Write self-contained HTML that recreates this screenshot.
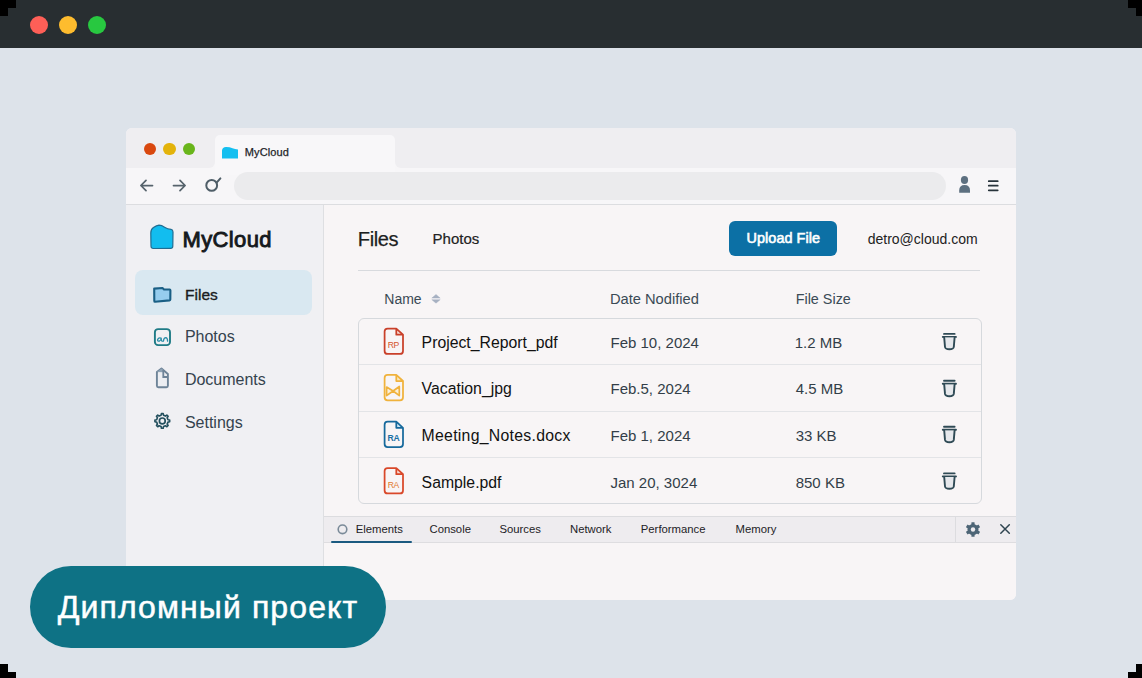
<!DOCTYPE html>
<html><head><meta charset="utf-8">
<style>
*{margin:0;padding:0;box-sizing:border-box}
html,body{width:1142px;height:678px;overflow:hidden}
body{position:relative;background:#dde3ea;font-family:"Liberation Sans",sans-serif}
.a{position:absolute}
.t{position:absolute;line-height:1;white-space:nowrap}
.blk{position:absolute;background:#000}
</style></head><body>
<!-- top dark bar -->
<div class="a" style="left:0;top:0;width:1142px;height:48px;background:#282e31"></div>
<div class="a" style="left:30px;top:16px;width:18px;height:18px;border-radius:50%;background:#fe5f57"></div>
<div class="a" style="left:59px;top:16px;width:18px;height:18px;border-radius:50%;background:#febc2e"></div>
<div class="a" style="left:88px;top:16px;width:18px;height:18px;border-radius:50%;background:#28c840"></div>

<!-- browser window -->
<div class="a" id="win" style="left:126px;top:128px;width:890px;height:472px;border-radius:6px;overflow:hidden;background:#f7f6f8">
  <!-- title bar segments -->
  <div class="a" style="left:0;top:0;width:89px;height:39.5px;background:#efeef1;border-bottom-right-radius:6px"></div>
  <div class="a" style="left:269px;top:0;width:621px;height:39.5px;background:#efeef1;border-bottom-left-radius:6px"></div>
  <div class="a" style="left:89px;top:0;width:180px;height:20px;background:#efeef1"></div>
  <div class="a" style="left:89px;top:7px;width:180px;height:40px;background:#f8f7f9;border-radius:5px 5px 0 0"></div>
  <!-- traffic -->
  <div class="a" style="left:17.8px;top:14.6px;width:12.4px;height:12.4px;border-radius:50%;background:#d9480f"></div>
  <div class="a" style="left:37.2px;top:14.6px;width:12.4px;height:12.4px;border-radius:50%;background:#e3b30b"></div>
  <div class="a" style="left:56.6px;top:14.6px;width:12.4px;height:12.4px;border-radius:50%;background:#69b51b"></div>
  <!-- toolbar border -->
  <div class="a" style="left:0;top:76px;width:890px;height:1px;background:#dcdde0"></div>
  <!-- address bar -->
  <div class="a" style="left:108px;top:44px;width:712px;height:28px;border-radius:14px;background:#ebebed"></div>
  <!-- sidebar -->
  <div class="a" style="left:0;top:77px;width:197px;height:395px;background:#f0f0f3"></div>
  <div class="a" style="left:197px;top:77px;width:1px;height:395px;background:#dedfe2"></div>
  <!-- main -->
  <div class="a" style="left:198px;top:77px;width:692px;height:395px;background:#f8f5f6"></div>
  <!-- active item -->
  <div class="a" style="left:9px;top:142px;width:177px;height:45px;border-radius:8px;background:#d9e8f1"></div>
  <!-- header divider -->
  <div class="a" style="left:232px;top:142px;width:622px;height:1px;background:#d8dade"></div>
  <!-- table -->
  <div class="a" style="left:232px;top:189.5px;width:624px;height:186px;border:1px solid #d6d9dd;border-radius:6px;background:#f8f5f6"></div>
  <div class="a" style="left:233px;top:236px;width:622px;height:1px;background:#e3e4e7"></div>
  <div class="a" style="left:233px;top:283px;width:622px;height:1px;background:#e3e4e7"></div>
  <div class="a" style="left:233px;top:329px;width:622px;height:1px;background:#e3e4e7"></div>
  <!-- upload button -->
  <div class="a" style="left:603px;top:93px;width:108px;height:35px;border-radius:6px;background:#0c70a5"></div>
  <!-- devtools -->
  <div class="a" style="left:198px;top:388px;width:692px;height:1px;background:#dcdcdf"></div>
  <div class="a" style="left:198px;top:389px;width:692px;height:25px;background:#eeecef"></div>
  <div class="a" style="left:198px;top:414px;width:692px;height:1px;background:#dedde0"></div>
  <div class="a" style="left:204.5px;top:413px;width:81px;height:2px;border-radius:1px;background:#1b5a80"></div>
  <div class="a" style="left:829px;top:389px;width:1px;height:25px;background:#dcdcdf"></div>
</div>

<svg class="a" style="left:0;top:0" width="1142" height="678" viewBox="0 0 1142 678">
<path d="M222 158.4 V150.5 Q222.3 147.2 226 147 Q229.5 146.9 232.5 148.3 Q235 149.3 238 149.6 V158.4 Z" fill="#14bff0"/>
<g fill="none" stroke="#56636c" stroke-width="1.75" stroke-linecap="round" stroke-linejoin="round">
<path d="M152.5 185.5 H141 M146 180.4 L140.9 185.5 L146 190.6"/>
<path d="M173.5 185.5 H185 M180 180.4 L185.1 185.5 L180 190.6"/>
</g>
<g fill="none" stroke="#4f5e68" stroke-width="2"><circle cx="211.7" cy="185.4" r="5.4"/><path d="M216.6 182.6 L220.4 178.4" stroke-linecap="round"/></g>
<ellipse cx="964.5" cy="180" rx="3.6" ry="3.9" fill="#5d7080"/>
<path d="M959.2 192.8 V190.5 Q959.2 185 964.6 185 Q970 185 970 190.5 V192.8 Z" fill="#5d7080"/>
<g stroke="#27333b" stroke-width="1.8" stroke-linecap="round"><path d="M988.8 181.2 H997.7 M988.8 185.7 H997.7 M988.8 190.3 H997.7"/></g>
<path d="M150.8 233 Q150.8 229.3 153.5 227.6 Q156.5 225.4 159 225.2 Q161.5 225.2 165 227.4 Q167.5 229 171 229.4 Q173 229.7 173 232 L172.8 246.3 Q172.7 248.4 170.7 248.4 L153.3 248.5 Q151.1 248.5 151 246.3 Z" fill="#12bdef" stroke="#1f6d92" stroke-width="1.2"/>
<path d="M154.2 288.6 L162.5 288 L164 289.4 L169.6 289.5 Q170.4 289.6 170.4 290.4 L170.3 299.5 Q170.3 300.3 169.5 300.4 L155 301.8 Q154.3 301.8 154.3 301 Z" fill="#96cdee" stroke="#1a5f85" stroke-width="2.1" stroke-linejoin="round"/>
<rect x="154.9" y="329.1" width="15.1" height="16" rx="3.2" fill="none" stroke="#1f7b86" stroke-width="1.9"/>
<path d="M161 338.2 Q158.6 337.2 157.6 339.6 Q157.3 341.6 159.6 341 Q161 340.4 161.2 338.2 Q161.2 340.6 162.2 341.2 M163.4 341.2 Q163.8 337.6 165.8 337.6 Q167.6 337.8 167.6 341.2" fill="none" stroke="#2a8ea8" stroke-width="1.3" stroke-linecap="round" stroke-linejoin="round"/>
<path d="M156.9 372 L161.5 368.6 L167.9 374 V385.8 Q167.9 387.3 166.4 387.3 H158.4 Q156.9 387.3 156.9 385.8 Z" fill="#eceef2" stroke="#6e8498" stroke-width="1.9" stroke-linejoin="round"/>
<path d="M156.9 372 L161.5 368.6 L163.3 370 V372.2 Z" fill="#8ea2b4"/>
<path d="M163.3 370 V377 H167.9" fill="none" stroke="#6e8498" stroke-width="1.8"/>
<path d="M161.12 415.22 L161.43 413.55 L163.17 413.55 L163.48 415.22 L165.48 416.05 L166.88 415.09 L168.11 416.32 L167.15 417.72 L167.98 419.72 L169.65 420.03 L169.65 421.77 L167.98 422.08 L167.15 424.08 L168.11 425.48 L166.88 426.71 L165.48 425.75 L163.48 426.58 L163.17 428.25 L161.43 428.25 L161.12 426.58 L159.12 425.75 L157.72 426.71 L156.49 425.48 L157.45 424.08 L156.62 422.08 L154.95 421.77 L154.95 420.03 L156.62 419.72 L157.45 417.72 L156.49 416.32 L157.72 415.09 L159.12 416.05Z" fill="none" stroke="#24505e" stroke-width="1.65" stroke-linejoin="round"/>
<circle cx="162.3" cy="420.9" r="2.9" fill="none" stroke="#24505e" stroke-width="1.7"/>
<path d="M436 294.4 L440.2 298.1 H431.8 Z M431.8 299.7 H440.2 L436 303.2 Z" fill="#a7b1c2" stroke="#a7b1c2" stroke-width="0.4" stroke-linejoin="round"/>
<g transform="translate(383.0,327.8)">
<path d="M13.3 0.8 L20 6.9 H13.3 Z" fill="#f6dcd6"/>
<path d="M4.6 0.8 H13.3 L20 6.9 V23.2 Q20 26.2 17 26.2 H4.6 Q1.6 26.2 1.6 23.2 V3.8 Q1.6 0.8 4.6 0.8 Z M13.3 0.8 V6.9 H20" fill="none" stroke="#c9402a" stroke-width="1.75" stroke-linejoin="round"/>
<text x="10.4" y="20.6" text-anchor="middle" font-family="Liberation Sans" font-size="8.6" font-weight="normal" fill="#d5532c" letter-spacing="-0.3">RP</text>
</g>
<g transform="translate(383.0,374.1)">
<path d="M13.3 0.8 L20 6.9 H13.3 Z" fill="#fbe9bd"/>
<path d="M4.6 0.8 H13.3 L20 6.9 V23.2 Q20 26.2 17 26.2 H4.6 Q1.6 26.2 1.6 23.2 V3.8 Q1.6 0.8 4.6 0.8 Z M13.3 0.8 V6.9 H20" fill="none" stroke="#f0b23c" stroke-width="1.75" stroke-linejoin="round"/>
<path d="M3.6 13 L3.6 21.5 L10.1 16.9 Z M16.3 12.4 L16.3 21.5 L10.1 16.9 Z" fill="#fbf0d8" stroke="#f0b23c" stroke-width="1.7" stroke-linejoin="round"/>
</g>
<g transform="translate(383.0,420.9)">
<path d="M13.3 0.8 L20 6.9 H13.3 Z" fill="#cfe6f4"/>
<path d="M4.6 0.8 H13.3 L20 6.9 V23.2 Q20 26.2 17 26.2 H4.6 Q1.6 26.2 1.6 23.2 V3.8 Q1.6 0.8 4.6 0.8 Z M13.3 0.8 V6.9 H20" fill="none" stroke="#16699c" stroke-width="1.75" stroke-linejoin="round"/>
<text x="10.4" y="20.6" text-anchor="middle" font-family="Liberation Sans" font-size="8.6" font-weight="bold" fill="#1a6fa5" letter-spacing="-0.3">RA</text>
</g>
<g transform="translate(383.0,467.3)">
<path d="M13.3 0.8 L20 6.9 H13.3 Z" fill="#f7dcd4"/>
<path d="M4.6 0.8 H13.3 L20 6.9 V23.2 Q20 26.2 17 26.2 H4.6 Q1.6 26.2 1.6 23.2 V3.8 Q1.6 0.8 4.6 0.8 Z M13.3 0.8 V6.9 H20" fill="none" stroke="#d9482a" stroke-width="1.75" stroke-linejoin="round"/>
<text x="10.4" y="20.6" text-anchor="middle" font-family="Liberation Sans" font-size="8.6" font-weight="normal" fill="#e2782f" letter-spacing="-0.3">RA</text>
</g>
<g transform="translate(0,0.00)" stroke="#2f4a55" stroke-linecap="round">
<path d="M944 333.9 H954.6" stroke-width="1.9"/>
<path d="M942.8 336.9 H956" stroke-width="1.9"/>
<path d="M944.2 337.5 L945 347 Q945.3 349.3 949.4 349.3 Q953.5 349.3 953.8 347 L954.6 337.5" fill="#e6e8ec" stroke-width="1.9" stroke-linejoin="round"/>
</g>
<g transform="translate(0,46.90)" stroke="#2f4a55" stroke-linecap="round">
<path d="M944 333.9 H954.6" stroke-width="1.9"/>
<path d="M942.8 336.9 H956" stroke-width="1.9"/>
<path d="M944.2 337.5 L945 347 Q945.3 349.3 949.4 349.3 Q953.5 349.3 953.8 347 L954.6 337.5" fill="#e6e8ec" stroke-width="1.9" stroke-linejoin="round"/>
</g>
<g transform="translate(0,92.90)" stroke="#2f4a55" stroke-linecap="round">
<path d="M944 333.9 H954.6" stroke-width="1.9"/>
<path d="M942.8 336.9 H956" stroke-width="1.9"/>
<path d="M944.2 337.5 L945 347 Q945.3 349.3 949.4 349.3 Q953.5 349.3 953.8 347 L954.6 337.5" fill="#e6e8ec" stroke-width="1.9" stroke-linejoin="round"/>
</g>
<g transform="translate(0,139.50)" stroke="#2f4a55" stroke-linecap="round">
<path d="M944 333.9 H954.6" stroke-width="1.9"/>
<path d="M942.8 336.9 H956" stroke-width="1.9"/>
<path d="M944.2 337.5 L945 347 Q945.3 349.3 949.4 349.3 Q953.5 349.3 953.8 347 L954.6 337.5" fill="#e6e8ec" stroke-width="1.9" stroke-linejoin="round"/>
</g>
<circle cx="342.5" cy="529.3" r="4.3" fill="none" stroke="#7a8a98" stroke-width="1.6"/>
<g fill="#4d6576">
<rect x="971.4" y="522.2" width="3.2" height="4" rx="0.5" transform="rotate(0 973 529.5)"/>
<rect x="971.4" y="522.2" width="3.2" height="4" rx="0.5" transform="rotate(60 973 529.5)"/>
<rect x="971.4" y="522.2" width="3.2" height="4" rx="0.5" transform="rotate(120 973 529.5)"/>
<rect x="971.4" y="522.2" width="3.2" height="4" rx="0.5" transform="rotate(180 973 529.5)"/>
<rect x="971.4" y="522.2" width="3.2" height="4" rx="0.5" transform="rotate(240 973 529.5)"/>
<rect x="971.4" y="522.2" width="3.2" height="4" rx="0.5" transform="rotate(300 973 529.5)"/>
<circle cx="973" cy="529.5" r="5.5"/></g>
<circle cx="973" cy="529.5" r="2.2" fill="#eeecef"/>
<path d="M1000.8 524.8 L1009.3 533.3 M1009.3 524.8 L1000.8 533.3" stroke="#2f4450" stroke-width="1.5" stroke-linecap="round"/>
</svg>
<!-- texts -->
<div class="t" style="left:244.8px;top:146.5px;font-size:11px;font-weight:400;color:#222428;-webkit-text-stroke:0.25px #222428;letter-spacing:0.12px">MyCloud</div>
<div class="t" style="left:182.6px;top:229.3px;font-size:22px;font-weight:400;color:#15191c;letter-spacing:0.35px;-webkit-text-stroke:0.9px #15191c">MyCloud</div>
<div class="t" style="left:185.1px;top:286.7px;font-size:15.5px;color:#1a1c1f;-webkit-text-stroke:0.35px #1a1c1f">Files</div>
<div class="t" style="left:184.9px;top:328.5px;font-size:16px;color:#34434e">Photos</div>
<div class="t" style="left:184.9px;top:371.9px;font-size:16px;color:#34434e">Documents</div>
<div class="t" style="left:184.9px;top:414.5px;font-size:16px;color:#34434e">Settings</div>

<div class="t" style="left:357.8px;top:229.4px;font-size:20px;color:#1d1f22;letter-spacing:-0.35px;-webkit-text-stroke:0.25px #1d1f22">Files</div>
<div class="t" style="left:432.6px;top:231px;font-size:15px;color:#222;-webkit-text-stroke:0.2px #222">Photos</div>
<div class="t" style="left:746.6px;top:230.8px;font-size:14.4px;font-weight:400;color:#fff;-webkit-text-stroke:0.6px #fff;letter-spacing:0.05px">Upload File</div>
<div class="t" style="left:867.7px;top:232.2px;font-size:14px;color:#222">detro@cloud.com</div>

<div class="t" style="left:384.3px;top:292.2px;font-size:14px;color:#3a4a55">Name</div>
<div class="t" style="left:609.9px;top:291.9px;font-size:14.7px;color:#3a4a55">Date Nodified</div>
<div class="t" style="left:795.7px;top:291.9px;font-size:14.4px;color:#3a4a55">File Size</div>

<div class="t" style="left:421.6px;top:335.3px;font-size:15.8px;color:#111">Project_Report_pdf</div>
<div class="t" style="left:421.6px;top:381.3px;font-size:15.8px;color:#111">Vacation_jpg</div>
<div class="t" style="left:421.6px;top:427.8px;font-size:15.8px;color:#111;letter-spacing:0.28px">Meeting_Notes.docx</div>
<div class="t" style="left:421.6px;top:474.6px;font-size:15.8px;color:#111">Sample.pdf</div>

<div class="t" style="left:610.5px;top:335px;font-size:15px;color:#333e48">Feb 10, 2024</div>
<div class="t" style="left:610.5px;top:381.3px;font-size:15px;color:#333e48">Feb.5, 2024</div>
<div class="t" style="left:610.5px;top:427.8px;font-size:15px;color:#333e48">Feb 1, 2024</div>
<div class="t" style="left:610.5px;top:474.6px;font-size:15px;color:#333e48">Jan 20, 3024</div>

<div class="t" style="left:794.7px;top:335px;font-size:15px;color:#333e48">1.2 MB</div>
<div class="t" style="left:795.7px;top:381.3px;font-size:15px;color:#333e48">4.5 MB</div>
<div class="t" style="left:795.7px;top:427.8px;font-size:15px;color:#333e48">33 KB</div>
<div class="t" style="left:795.7px;top:474.6px;font-size:15px;color:#333e48">850 KB</div>

<div class="t" style="left:355.8px;top:524.1px;font-size:11.3px;color:#1d2226">Elements</div>
<div class="t" style="left:429.5px;top:524.1px;font-size:11.3px;color:#1d2226">Console</div>
<div class="t" style="left:499.4px;top:524.1px;font-size:11.3px;color:#1d2226">Sources</div>
<div class="t" style="left:570px;top:524.1px;font-size:11.3px;color:#1d2226">Network</div>
<div class="t" style="left:640.8px;top:524.1px;font-size:11.3px;color:#1d2226">Performance</div>
<div class="t" style="left:735.6px;top:524.1px;font-size:11.3px;color:#1d2226">Memory</div>

<!-- badge -->
<div class="a" style="left:29.5px;top:565.5px;width:356.5px;height:82px;border-radius:41px;background:#0e7285"></div>
<div class="t" style="left:57.8px;top:591px;font-size:32px;color:#fff;letter-spacing:1.1px;-webkit-text-stroke:0.5px #fff">Дипломный проект</div>

<!-- corner blocks -->
<div class="blk" style="left:0;top:0;width:16px;height:8px"></div>
<div class="blk" style="left:0;top:8px;width:8px;height:8px"></div>
<div class="blk" style="left:1128px;top:0;width:14px;height:8px"></div>
<div class="blk" style="left:1136px;top:8px;width:6px;height:8px"></div>
<div class="blk" style="left:0;top:664px;width:8px;height:8px"></div>
<div class="blk" style="left:0;top:672px;width:16px;height:6px"></div>
<div class="blk" style="left:1136px;top:664px;width:6px;height:8px"></div>
<div class="blk" style="left:1128px;top:672px;width:14px;height:6px"></div>
</body></html>
